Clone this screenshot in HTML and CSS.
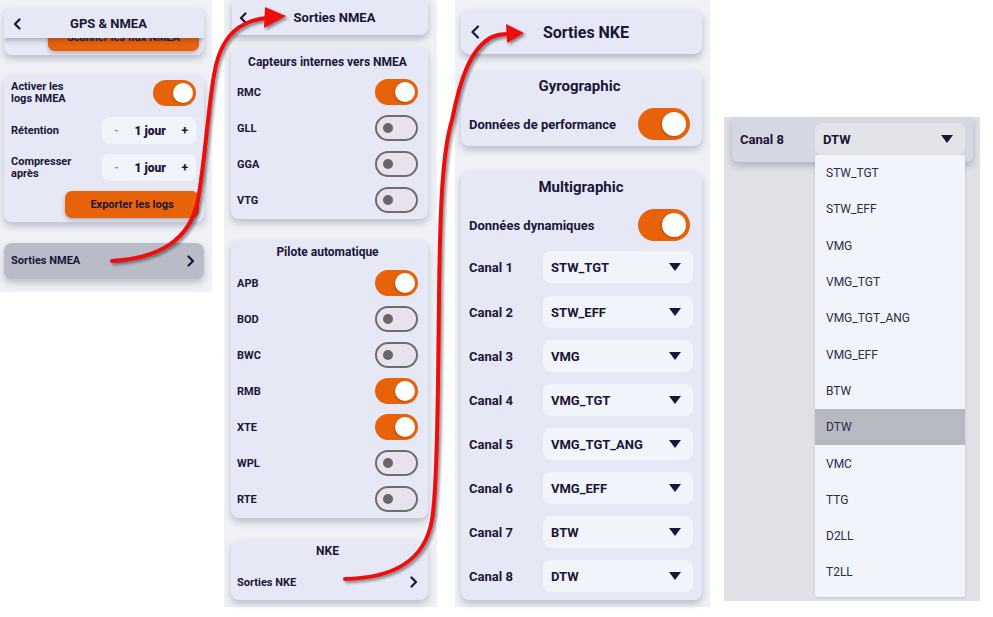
FILE: index.html
```html
<!DOCTYPE html>
<html lang="fr">
<head>
    <meta charset="UTF-8">
    <meta name="viewport" content="width=device-width, initial-scale=1.0">
    <title>GPS &amp; NMEA - Sorties</title>
    <link rel="stylesheet" href="styles.css">
</head>
<body>

<div class="board">

    <!-- Ecran 1 : GPS & NMEA -->
    <section class="screen screen-gps">
        <div class="card card-top">
            <div class="topbar">
                <svg class="back" width="8" height="12" viewBox="0 0 8 12"><polyline points="6.5,1.5 2,6 6.5,10.5"/></svg>
                <h2>GPS &amp; NMEA</h2>
            </div>
            <div class="scrolled"><button class="btn btn-scan">Scanner les flux NMEA</button></div>
        </div>

        <div class="card card-logs">
            <div class="row row-toggle">
                <span class="label">Activer les<br>logs NMEA</span>
                <span class="switch on"></span>
            </div>
            <div class="row row-step">
                <span class="label">Rétention</span>
                <div class="stepper"><span class="minus">-</span><b>1 jour</b><span>+</span></div>
            </div>
            <div class="row row-step">
                <span class="label">Compresser<br>après</span>
                <div class="stepper"><span class="minus">-</span><b>1 jour</b><span>+</span></div>
            </div>
            <div class="row row-btn">
                <button class="btn btn-export">Exporter les logs</button>
            </div>
        </div>

        <div class="card card-link pressed">
            <span class="label">Sorties NMEA</span>
            <svg class="chev" width="8" height="12" viewBox="0 0 8 12"><polyline points="1.5,1.5 6,6 1.5,10.5"/></svg>
        </div>
    </section>

    <!-- Ecran 2 : Sorties NMEA -->
    <section class="screen screen-nmea">
        <div class="header">
            <svg class="back" width="8" height="12" viewBox="0 0 8 12"><polyline points="6.5,1.5 2,6 6.5,10.5"/></svg>
            <h2>Sorties NMEA</h2>
        </div>

        <div class="card group group-sensors">
            <h3>Capteurs internes vers NMEA</h3>
            <div class="item"><span>RMC</span><span class="switch on"></span></div>
            <div class="item"><span>GLL</span><span class="switch"></span></div>
            <div class="item"><span>GGA</span><span class="switch"></span></div>
            <div class="item"><span>VTG</span><span class="switch"></span></div>
        </div>

        <div class="card group group-pilot">
            <h3>Pilote automatique</h3>
            <div class="item"><span>APB</span><span class="switch on"></span></div>
            <div class="item"><span>BOD</span><span class="switch"></span></div>
            <div class="item"><span>BWC</span><span class="switch"></span></div>
            <div class="item"><span>RMB</span><span class="switch on"></span></div>
            <div class="item"><span>XTE</span><span class="switch on"></span></div>
            <div class="item"><span>WPL</span><span class="switch"></span></div>
            <div class="item"><span>RTE</span><span class="switch"></span></div>
        </div>

        <div class="card group group-nke">
            <h3>NKE</h3>
            <div class="item">
                <span>Sorties NKE</span>
                <svg class="chev" width="8" height="12" viewBox="0 0 8 12"><polyline points="1.5,1.5 6,6 1.5,10.5"/></svg>
            </div>
        </div>
    </section>

    <!-- Ecran 3 : Sorties NKE -->
    <section class="screen screen-nke">
        <div class="header header-lg">
            <svg class="back" width="10" height="14" viewBox="0 0 10 14"><polyline points="8,1.5 2.5,7 8,12.5"/></svg>
            <h2>Sorties NKE</h2>
        </div>

        <div class="card panel panel-gyro">
            <h3>Gyrographic</h3>
            <div class="line line-toggle"><span>Données de performance</span><span class="switch switch-lg on"></span></div>
        </div>

        <div class="card panel panel-multi">
            <h3>Multigraphic</h3>
            <div class="line line-toggle"><span>Données dynamiques</span><span class="switch switch-lg on"></span></div>
            <div class="line"><span>Canal 1</span><div class="select">STW_TGT<i class="caret"></i></div></div>
            <div class="line"><span>Canal 2</span><div class="select">STW_EFF<i class="caret"></i></div></div>
            <div class="line"><span>Canal 3</span><div class="select">VMG<i class="caret"></i></div></div>
            <div class="line"><span>Canal 4</span><div class="select">VMG_TGT<i class="caret"></i></div></div>
            <div class="line"><span>Canal 5</span><div class="select">VMG_TGT_ANG<i class="caret"></i></div></div>
            <div class="line"><span>Canal 6</span><div class="select">VMG_EFF<i class="caret"></i></div></div>
            <div class="line"><span>Canal 7</span><div class="select">BTW<i class="caret"></i></div></div>
            <div class="line"><span>Canal 8</span><div class="select">DTW<i class="caret"></i></div></div>
        </div>
    </section>

    <!-- Ecran 4 : liste ouverte -->
    <section class="screen screen-menu">
        <div class="card dimmed">
            <div class="line"><span>Canal 8</span><div class="select">DTW<i class="caret"></i></div></div>
        </div>
        <ul class="dropdown">
            <li>STW_TGT</li>
            <li>STW_EFF</li>
            <li>VMG</li>
            <li>VMG_TGT</li>
            <li>VMG_TGT_ANG</li>
            <li>VMG_EFF</li>
            <li>BTW</li>
            <li class="selected">DTW</li>
            <li>VMC</li>
            <li>TTG</li>
            <li>D2LL</li>
            <li>T2LL</li>
        </ul>
    </section>

    <!-- fleches de navigation -->
    <svg class="arrows" width="993" height="617" viewBox="0 0 993 617">
        <defs>
            <filter id="shade" x="-20%" y="-20%" width="140%" height="140%">
                <feDropShadow dx="2" dy="2" stdDeviation="1.6" flood-color="#000" flood-opacity="0.45"/>
            </filter>
        </defs>
        <g filter="url(#shade)">
            <path d="M112,261 C160,258 190,240 198,200 C205,160 208,110 214,75 C218,50 228,32 245,24 C252,20 258,19 267,18"/>
            <polygon points="265,7 286,16 264,28"/>
            <path d="M345,579 C395,578 425,560 432,520 C437,490 438,400 439,300 C440,200 443,150 452,120 C460,80 470,50 490,38 C496,35 502,34 508,34"/>
            <polygon points="506,24 524,33 507,43"/>
        </g>
    </svg>

</div>

</body>
</html>
```

FILE: styles.css
```css
* {
    box-sizing: border-box;
}
body {
    margin: 0;
    background: #ffffff;
    font-family: 'Roboto', 'Noto Sans', sans-serif;
    color: #1b1538;
}
h2, h3 {
    margin: 0;
    font-weight: 700;
}
.board {
    position: relative;
    display: flex;
    align-items: flex-start;
    height: 617px;
}
.screen {
    background: #eff1f7;
    flex: none;
}
.card {
    background: #e6e9f5;
    border-radius: 8px;
    box-shadow: 0 4px 7px rgba(40, 40, 70, 0.25);
}
.back, .chev {
    fill: none;
    stroke: #1b1538;
    stroke-width: 2.2;
    stroke-linecap: round;
    stroke-linejoin: round;
    flex: none;
}
.btn {
    display: block;
    border: none;
    border-radius: 7px;
    background: #e8620a;
    color: #1b1538;
    font-family: inherit;
    font-weight: 700;
    font-size: 11px;
    box-shadow: 0 2px 4px rgba(0, 0, 0, 0.25);
}

/* toggle */
.switch {
    position: relative;
    flex: none;
    width: 43px;
    height: 26px;
    border-radius: 13px;
    background: #e8e2ee;
    border: 2px solid #6d6d6d;
}
.switch::after {
    content: "";
    position: absolute;
    left: 6px;
    top: 6px;
    width: 10px;
    height: 10px;
    border-radius: 50%;
    background: #666666;
}
.switch.on {
    background: #e8620a;
    border-color: #e8620a;
}
.switch.on::after {
    left: auto;
    right: 1px;
    top: 1px;
    width: 20px;
    height: 20px;
    background: #ffffff;
    box-shadow: -1px 1px 2px rgba(0, 0, 0, 0.2);
}
.switch-lg {
    width: 52px;
    height: 32px;
    border-radius: 16px;
}
.switch-lg.on::after {
    right: 2px;
    top: 2px;
    width: 24px;
    height: 24px;
}

/* ecran 1 */
.screen-gps {
    width: 212px;
    height: 292px;
    padding: 7px 8px 0 4px;
    font-size: 11px;
    font-weight: 700;
}
.card-top {
    height: 48px;
    overflow: hidden;
}
.topbar {
    position: relative;
    z-index: 1;
    display: flex;
    align-items: center;
    height: 31px;
    padding: 2px 0 0 9px;
    background: #e6e9f5;
    border-radius: 8px 8px 0 0;
    box-shadow: 0 3px 5px rgba(40, 40, 70, 0.28);
}
.topbar h2 {
    flex: 1;
    text-align: center;
    font-size: 13px;
    margin-right: 8px;
}
.scrolled {
    height: 17px;
    padding-left: 44px;
}
.btn-scan {
    width: 151px;
    height: 28px;
    margin-top: -15px;
}
.card-logs {
    margin-top: 20px;
    padding: 5px 8px 4px 7px;
}
.row {
    display: flex;
    align-items: center;
    justify-content: space-between;
}
.label {
    line-height: 12px;
}
.row-step {
    margin-top: 11px;
}
.row-step + .row-step {
    margin-top: 10px;
}
.stepper {
    display: flex;
    align-items: center;
    justify-content: space-between;
    width: 94px;
    height: 27px;
    padding: 0 8px 0 12px;
    background: #f2f4fb;
    border-radius: 7px;
    font-size: 12px;
}
.stepper .minus {
    color: #9a98a8;
}
.row-btn {
    justify-content: flex-end;
    margin-top: 10px;
}
.row-btn .btn {
    width: 134px;
    height: 27px;
    margin-right: -3px;
}
.card-link {
    display: flex;
    align-items: center;
    justify-content: space-between;
    height: 36px;
    margin-top: 21px;
    padding: 0 9px 0 7px;
}
.card-link.pressed {
    background: #b9bcc6;
}

/* ecran 2 */
.screen-nmea {
    width: 213px;
    height: 607px;
    margin-left: 12px;
    padding: 0 9px 0 7px;
    font-size: 11px;
    font-weight: 700;
}
.header {
    display: flex;
    align-items: center;
    height: 35px;
    margin-left: 1px;
    padding: 0 0 0 7px;
    background: #e6e9f5;
    border-radius: 0 0 8px 8px;
    box-shadow: 0 4px 7px rgba(40, 40, 70, 0.28);
}
.header h2 {
    flex: 1;
    text-align: center;
    font-size: 13px;
    margin-right: 6px;
}
.group {
    padding: 7px 10px 1px 6px;
}
.group h3 {
    text-align: center;
    font-size: 12px;
    line-height: 16px;
    margin-bottom: 4px;
}
.group-sensors {
    margin-top: 12px;
}
.group-pilot {
    margin-top: 21px;
    padding-top: 4px;
}
.group-pilot h3 {
    margin-bottom: 5px;
}
.group-nke {
    margin-top: 22px;
    padding-top: 3px;
    padding-bottom: 0;
}
.group-nke h3 {
    margin-bottom: 5px;
}
.item {
    display: flex;
    align-items: center;
    justify-content: space-between;
    height: 36px;
}

/* ecran 3 */
.screen-nke {
    width: 255px;
    height: 607px;
    margin-left: 18px;
    padding: 10px 8px 0 6px;
    font-size: 13px;
    font-weight: 700;
}
.header-lg {
    height: 44px;
    margin-left: 0;
    padding-left: 9px;
    border-radius: 8px;
}
.header-lg h2 {
    font-size: 16px;
    margin-right: 10px;
}
.panel {
    padding: 6px 12px 2px 8px;
}
.panel h3 {
    text-align: center;
    font-size: 15px;
    line-height: 20px;
}
.panel-gyro {
    margin-top: 16px;
}
.panel-multi {
    margin-top: 25px;
    padding-right: 9px;
}
.line {
    display: flex;
    align-items: center;
    justify-content: space-between;
    height: 44px;
}
.line-toggle {
    height: 40px;
    margin-top: 8px;
}
.panel-multi .line-toggle {
    margin-right: 3px;
}
.panel-multi .line:nth-of-type(2) {
    margin-bottom: 1px;
}
.select {
    display: flex;
    align-items: center;
    justify-content: space-between;
    width: 150px;
    height: 32px;
    padding: 0 12px 0 8px;
    background: #f2f4fb;
    border-radius: 8px;
}
.caret {
    width: 0;
    height: 0;
    border-left: 6px solid transparent;
    border-right: 6px solid transparent;
    border-top: 8px solid #1b1538;
}

/* ecran 4 */
.screen-menu {
    position: relative;
    width: 256px;
    height: 484px;
    margin-left: 14px;
    margin-top: 117px;
    padding: 0 7px 0 8px;
    background: #dfe1e6;
    font-size: 13px;
    font-weight: 700;
}
.dimmed {
    height: 45px;
    padding: 0 8px;
    background: #d5d8e3;
    border-radius: 0 0 6px 6px;
}
.dimmed .line {
    height: 45px;
    padding-bottom: 1px;
}
.dimmed .select {
    background: #e2e4ea;
}
.dropdown {
    position: absolute;
    left: 91px;
    top: 38px;
    width: 150px;
    margin: 0;
    padding: 0 0 6px;
    list-style: none;
    background: #f1f4fb;
    border-radius: 3px;
    box-shadow: 0 1px 3px rgba(0, 0, 0, 0.12);
    font-weight: 400;
    font-size: 12px;
    color: #2d2a4a;
}
.dropdown li {
    display: flex;
    align-items: center;
    height: 36.3px;
    padding-left: 11px;
}
.dropdown li.selected {
    background: #b6b9c2;
}

/* fleches */
.arrows {
    position: absolute;
    left: 0;
    top: 0;
    pointer-events: none;
}
.arrows path {
    fill: none;
    stroke: #ee0a0a;
    stroke-width: 4;
    stroke-linecap: round;
}
.arrows polygon {
    fill: #ee0a0a;
}
```
